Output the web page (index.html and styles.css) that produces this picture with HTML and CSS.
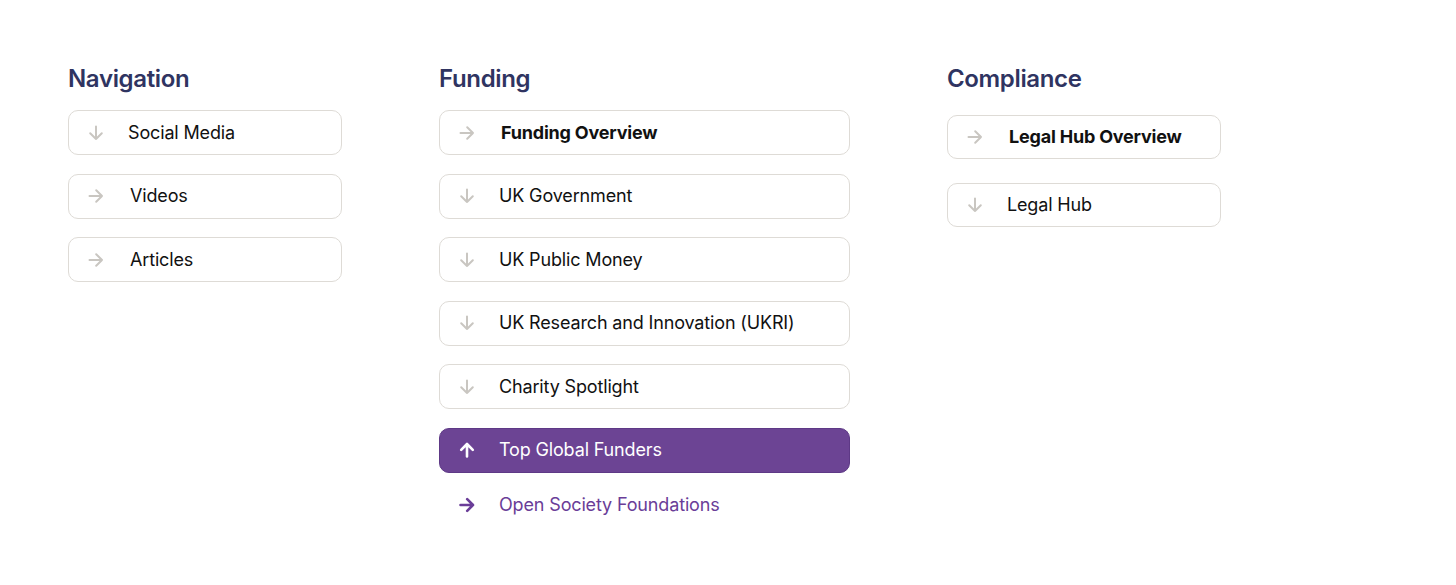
FILE: index.html
```html
<!DOCTYPE html>
<html lang="en">
<head>
<meta charset="utf-8">
<title>Menu</title>
<link rel="stylesheet" href="styles.css">
</head>
<body>
<div class="page">
  <section class="col col-nav">
    <h2 class="title">Navigation</h2>
    <div class="list">
      <a class="item"><svg class="ic" viewBox="0 0 16 16"><path d="M8 1.5v12.5M2.2 8.2L8 14l5.8-5.8"/></svg><span class="lbl">Social Media</span></a>
      <a class="item"><svg class="ic" viewBox="0 0 16 16"><path d="M1.5 8h12.5M8.2 2.2L14 8l-5.8 5.8"/></svg><span class="lbl shift">Videos</span></a>
      <a class="item"><svg class="ic" viewBox="0 0 16 16"><path d="M1.5 8h12.5M8.2 2.2L14 8l-5.8 5.8"/></svg><span class="lbl shift">Articles</span></a>
    </div>
  </section>
  <section class="col col-fund">
    <h2 class="title">Funding</h2>
    <div class="list">
      <a class="item"><svg class="ic" viewBox="0 0 16 16"><path d="M1.5 8h12.5M8.2 2.2L14 8l-5.8 5.8"/></svg><span class="lbl bold">Funding Overview</span></a>
      <a class="item"><svg class="ic" viewBox="0 0 16 16"><path d="M8 1.5v12.5M2.2 8.2L8 14l5.8-5.8"/></svg><span class="lbl">UK Government</span></a>
      <a class="item"><svg class="ic" viewBox="0 0 16 16"><path d="M8 1.5v12.5M2.2 8.2L8 14l5.8-5.8"/></svg><span class="lbl">UK Public Money</span></a>
      <a class="item"><svg class="ic" viewBox="0 0 16 16"><path d="M8 1.5v12.5M2.2 8.2L8 14l5.8-5.8"/></svg><span class="lbl">UK Research and Innovation (UKRI)</span></a>
      <a class="item"><svg class="ic" viewBox="0 0 16 16"><path d="M8 1.5v12.5M2.2 8.2L8 14l5.8-5.8"/></svg><span class="lbl">Charity Spotlight</span></a>
      <a class="item active"><svg class="ic" viewBox="0 0 16 16"><path d="M8 14.5V2M2.2 7.8L8 2l5.8 5.8"/></svg><span class="lbl">Top Global Funders</span></a>
      <a class="item sub"><svg class="ic" viewBox="0 0 16 16"><path d="M1.5 8h12.5M8.2 2.2L14 8l-5.8 5.8"/></svg><span class="lbl">Open Society Foundations</span></a>
    </div>
  </section>
  <section class="col col-comp">
    <h2 class="title">Compliance</h2>
    <div class="list list-comp">
      <a class="item"><svg class="ic" viewBox="0 0 16 16"><path d="M1.5 8h12.5M8.2 2.2L14 8l-5.8 5.8"/></svg><span class="lbl bold">Legal Hub Overview</span></a>
      <a class="item"><svg class="ic" viewBox="0 0 16 16"><path d="M8 1.5v12.5M2.2 8.2L8 14l5.8-5.8"/></svg><span class="lbl">Legal Hub</span></a>
    </div>
  </section>
</div>
</body>
</html>
```

FILE: styles.css
```css
* { box-sizing: border-box; }
html, body { margin: 0; padding: 0; background: #ffffff; }
body {
  font-family: Inter, "Noto Sans", "Liberation Sans", sans-serif;
  color: #111111;
}
.page {
  display: flex;
  align-items: flex-start;
  gap: 97px;
  padding: 64px 0 0 68px;
}
.col-nav { width: 274px; }
.col-fund { width: 411px; }
.col-comp { width: 274px; }
.title {
  margin: 0;
  font-size: 24px;
  line-height: 30px;
  font-weight: 600;
  color: #2f3461;
  letter-spacing: -0.35px;
}
.list {
  display: flex;
  flex-direction: column;
  gap: 18.6px;
  margin-top: 16px;
}
.list-comp { margin-top: 21px; gap: 24px; }
.list-comp .item { height: 44px; }
.item {
  display: flex;
  align-items: center;
  height: 45px;
  padding-left: 19px;
  border: 1.5px solid #dedbd6;
  border-radius: 10px;
  background: #ffffff;
  text-decoration: none;
  color: #111111;
}
.ic {
  width: 16px;
  height: 16px;
  flex: none;
  fill: none;
  stroke: #c9c6c1;
  stroke-width: 2;
  stroke-linecap: round;
  stroke-linejoin: round;
}
.lbl {
  margin-left: 24px;
  font-size: 18px;
  line-height: 22px;
  letter-spacing: -0.15px;
  white-space: nowrap;
}
.lbl.shift { margin-left: 26px; }
.lbl.bold { font-weight: 700; margin-left: 26px; letter-spacing: -0.2px; }
.item.active {
  background: #6c4494;
  border-color: #5e3986;
  color: #ffffff;
}
.item.active .ic { stroke: #ffffff; stroke-width: 2.6; }
.item.sub {
  border-color: transparent;
  background: transparent;
  color: #6a3d98;
  margin-top: -9px;
}
.item.sub .ic { stroke: #6a3d98; stroke-width: 2.6; }
```
